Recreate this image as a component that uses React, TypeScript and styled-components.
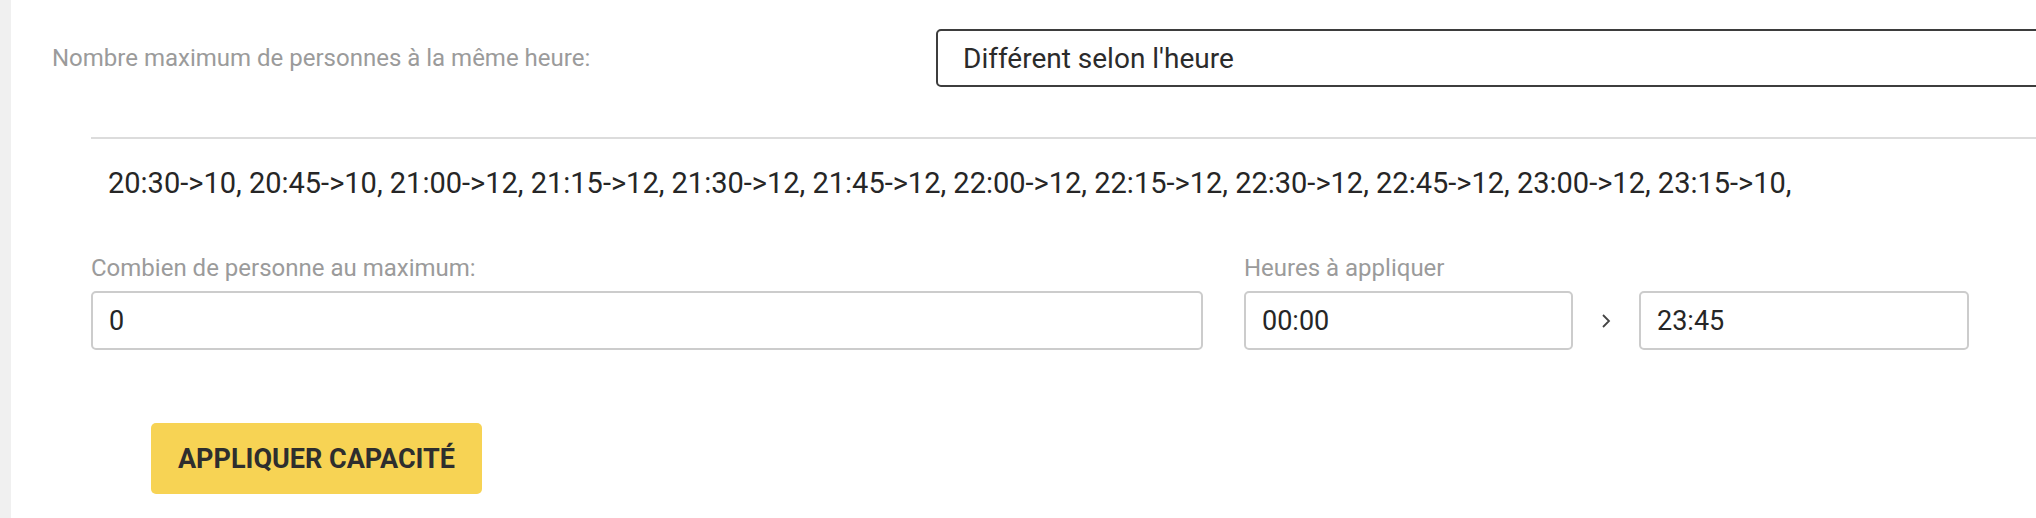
import styled, { createGlobalStyle } from "styled-components";

const GlobalStyle = createGlobalStyle`
  html, body {
    margin: 0;
    padding: 0;
    background: #ffffff;
    overflow: hidden;
  }
  body {
    font-family: Roboto, "Liberation Sans", Arial, sans-serif;
    color: #2b2b2b;
  }
`;

const Page = styled.div`
  display: flex;
  width: 2036px;
  height: 518px;
  overflow: hidden;
`;

const SideStrip = styled.div`
  flex: 0 0 11px;
  background: #f0f0f0;
`;

const Main = styled.div`
  flex: 1;
  min-width: 0;
  display: flex;
  flex-direction: column;
`;

const TopRow = styled.div`
  display: flex;
  align-items: center;
  padding: 29px 0 0 41px;
`;

const TopLabel = styled.div`
  flex: 0 0 884px;
  font-size: 24px;
  line-height: 28px;
  color: #9b9b9b;
`;

const SelectBox = styled.div`
  flex: 0 0 1160px;
  box-sizing: border-box;
  height: 58px;
  display: flex;
  align-items: center;
  padding-left: 25px;
  border: 2px solid #3d3d3d;
  border-radius: 5px;
  font-size: 28px;
  color: #2b2b2b;
`;

const Section = styled.div`
  margin: 50px 0 0 80px;
`;

const Divider = styled.hr`
  margin: 0;
  border: none;
  height: 2px;
  background: #dcdcdc;
`;

const Summary = styled.div`
  padding: 27px 0 0 17px;
  font-size: 29px;
  line-height: 34px;
  color: #262626;
  white-space: nowrap;
`;

const FormRow = styled.div`
  display: flex;
  gap: 41px;
  padding: 54px 67px 0 0;
`;

const Field = styled.div<{ $grow?: boolean }>`
  display: flex;
  flex-direction: column;
  gap: 9px;
  flex: ${(p) => (p.$grow ? "1" : "0 0 725px")};
  min-width: 0;
`;

const FieldLabel = styled.div`
  font-size: 24px;
  line-height: 28px;
  color: #9b9b9b;
`;

const RangeRow = styled.div`
  display: flex;
  align-items: center;
`;

const Input = styled.input<{ $width?: number }>`
  box-sizing: border-box;
  height: 59px;
  width: ${(p) => (p.$width ? `${p.$width}px` : "100%")};
  padding: 0 16px;
  border: 2px solid #cccccc;
  border-radius: 5px;
  font-family: Roboto, "Liberation Sans", Arial, sans-serif;
  font-size: 27px;
  color: #262626;
  background: #fff;
  outline: none;
`;

const Chevron = styled.div`
  flex: 0 0 66px;
  display: flex;
  justify-content: center;
  color: #444;
`;

const ApplyButton = styled.button`
  margin: 73px 0 0 60px;
  align-self: flex-start;
  width: 331px;
  height: 71px;
  border: none;
  border-radius: 5px;
  background: #f7d354;
  color: #2e2e2e;
  font-family: Roboto, "Liberation Sans", Arial, sans-serif;
  font-weight: 700;
  font-size: 27px;
  cursor: pointer;
`;

const slots = [
  ["20:30", 10],
  ["20:45", 10],
  ["21:00", 12],
  ["21:15", 12],
  ["21:30", 12],
  ["21:45", 12],
  ["22:00", 12],
  ["22:15", 12],
  ["22:30", 12],
  ["22:45", 12],
  ["23:00", 12],
  ["23:15", 10],
];

const App = () => {
  return (
    <>
      <GlobalStyle />
      <Page>
        <SideStrip />
        <Main>
          <TopRow>
            <TopLabel>Nombre maximum de personnes à la même heure:</TopLabel>
            <SelectBox>Différent selon l'heure</SelectBox>
          </TopRow>
          <Section>
            <Divider />
            <Summary>
              {slots.map(([t, n]) => `${t}->${n}, `).join("")}
            </Summary>
            <FormRow>
              <Field $grow>
                <FieldLabel>Combien de personne au maximum:</FieldLabel>
                <Input defaultValue="0" />
              </Field>
              <Field>
                <FieldLabel>Heures à appliquer</FieldLabel>
                <RangeRow>
                  <Input $width={329} defaultValue="00:00" />
                  <Chevron>
                    <svg width="10" height="16" viewBox="0 0 10 16">
                      <polyline
                        points="2,2 8,8 2,14"
                        fill="none"
                        stroke="currentColor"
                        strokeWidth="1.8"
                      />
                    </svg>
                  </Chevron>
                  <Input $width={330} defaultValue="23:45" />
                </RangeRow>
              </Field>
            </FormRow>
            <ApplyButton>APPLIQUER CAPACITÉ</ApplyButton>
          </Section>
        </Main>
      </Page>
    </>
  );
};

export default App;
